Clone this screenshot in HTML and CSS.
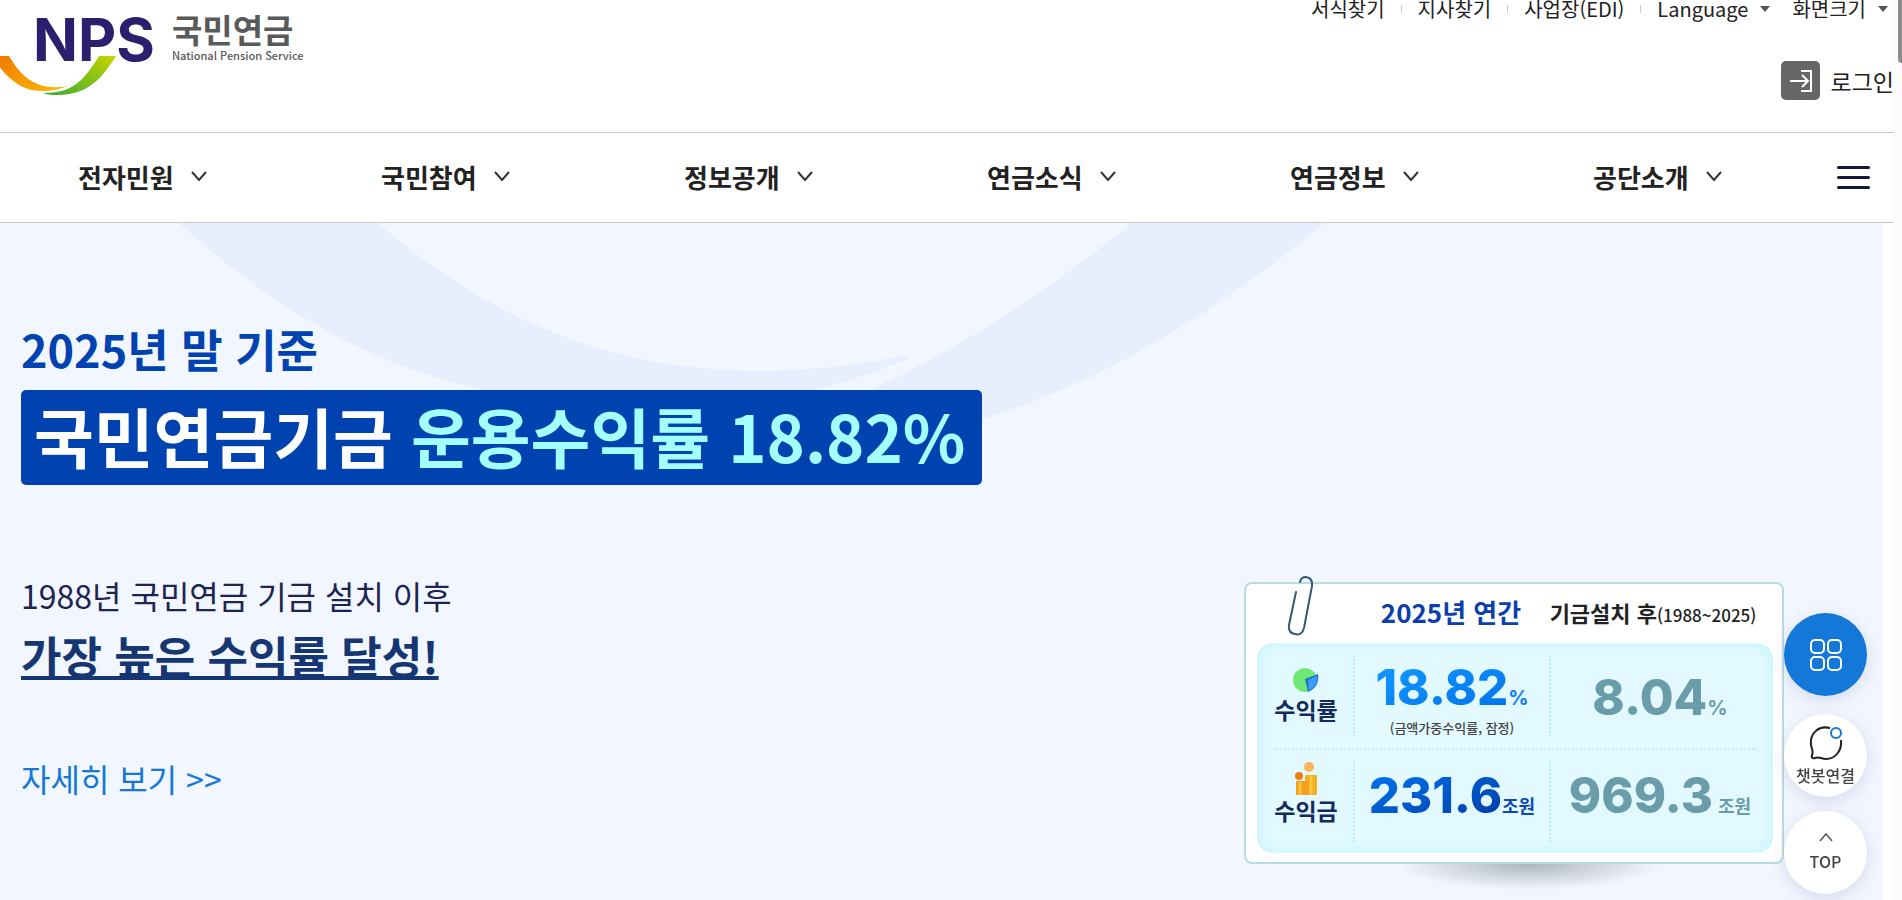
FILE: index.html
```html
<!DOCTYPE html>
<html lang="ko">
<head>
    <meta charset="UTF-8">
    <meta name="viewport" content="width=device-width, initial-scale=1.0">
    <title>국민연금</title>
    <link rel="stylesheet" href="styles.css">
</head>
<body>
    <div class="page">
        <header class="header">
            <a href="#" class="logo">
                <svg width="310" height="100" viewBox="0 0 310 100" role="img" aria-label="NPS 국민연금">
                    <defs>
                        <linearGradient id="orange" x1="0" y1="0" x2="1" y2="1">
                            <stop offset="0" stop-color="#f07800"/>
                            <stop offset="1" stop-color="#fdb900"/>
                        </linearGradient>
                        <linearGradient id="green" x1="0" y1="1" x2="1" y2="0">
                            <stop offset="0" stop-color="#3aaa35"/>
                            <stop offset="1" stop-color="#c8d400"/>
                        </linearGradient>
                    </defs>
                    <path d="M-4 56H9C20 74 34 92 68 86C60 89 51 91 43 91C24 91 10 82 -4 62Z" fill="url(#orange)"/>
                    <path d="M99 56H116C103 76 90 95 57 95Q48 95 43 93C72 93 83 82 99 56Z" fill="url(#green)"/>
                    <text x="33" y="61" class="logo-nps">NPS</text>
                    <text x="172" y="43" class="logo-name">국민연금</text>
                    <text x="172" y="60" class="logo-sub">National Pension Service</text>
                </svg>
            </a>
            <div class="header-right">
                <ul class="util">
                    <li><a href="#">서식찾기</a></li>
                    <li><a href="#">지사찾기</a></li>
                    <li><a href="#">사업장(EDI)</a></li>
                    <li><button type="button">Language <span class="caret"></span></button></li>
                    <li><button type="button">화면크기 <span class="caret"></span></button></li>
                </ul>
                <a href="#" class="login">
                    <span class="login-icon">
                        <svg width="39" height="39" viewBox="0 0 39 39" fill="none" stroke="#fff" stroke-width="2">
                            <path d="M20 10H30V30H20M9 20H26M21 14L27 20L21 26"/>
                        </svg>
                    </span>
                    로그인
                </a>
            </div>
        </header>

        <nav class="nav">
            <ul class="menu">
                <li><a href="#">전자민원 <svg class="chevron" viewBox="0 0 16 10"><path d="M1 1L8 9L15 1"/></svg></a></li>
                <li><a href="#">국민참여 <svg class="chevron" viewBox="0 0 16 10"><path d="M1 1L8 9L15 1"/></svg></a></li>
                <li><a href="#">정보공개 <svg class="chevron" viewBox="0 0 16 10"><path d="M1 1L8 9L15 1"/></svg></a></li>
                <li><a href="#">연금소식 <svg class="chevron" viewBox="0 0 16 10"><path d="M1 1L8 9L15 1"/></svg></a></li>
                <li><a href="#">연금정보 <svg class="chevron" viewBox="0 0 16 10"><path d="M1 1L8 9L15 1"/></svg></a></li>
                <li><a href="#">공단소개 <svg class="chevron" viewBox="0 0 16 10"><path d="M1 1L8 9L15 1"/></svg></a></li>
            </ul>
            <button type="button" class="all-menu" aria-label="전체메뉴">
                <span></span><span></span><span></span>
            </button>
        </nav>

        <main class="hero">
            <svg class="hero-bg" width="1340" height="260" viewBox="0 0 1340 260" fill="#e7eefe">
                <path d="M179 0H377C500 102 650 182 905 133Q910 134 905 137C870 152 820 167 760 180C620 196 440 188 276 77Q225 42 179 0Z"/>
                <path d="M1132 0H1325C1215 90 1100 160 985 195C900 218 800 230 700 222C810 202 960 140 1132 0Z"/>
            </svg>
            <div class="hero-text">
                <p class="hero-lead">2025년 말 기준</p>
                <h1 class="hero-title">국민연금기금 <em>운용수익률 18.82%</em></h1>
                <p class="hero-sub">1988년 국민연금 기금 설치 이후</p>
                <p class="hero-strong">가장 높은 수익률 달성!</p>
                <a href="#" class="hero-more">자세히 보기 &gt;&gt;</a>
            </div>

            <div class="card">
                <svg class="clip" width="28" height="62" viewBox="0 0 28 62" fill="none" stroke="#365a75" stroke-width="2" stroke-linecap="round">
                    <path d="M9 17L2 50Q1 58 8 59Q15 61 17 53L25 11Q26 3 19 2Q14 2 13 7"/>
                </svg>
                <table class="result">
                    <thead>
                        <tr>
                            <td></td>
                            <th scope="col" class="this-year">2025년 연간</th>
                            <th scope="col" class="since">기금설치 후<small>(1988~2025)</small></th>
                        </tr>
                    </thead>
                    <tbody>
                        <tr>
                            <th scope="row">
                                <svg width="26" height="26" viewBox="0 0 26 26">
                                    <circle cx="12" cy="13" r="12" fill="#70e878"/>
                                    <path d="M12 12L25 7Q27 20 15 25Z" fill="#1c71c9"/>
                                    <path d="M15 13L24 9Q25 19 16 23Z" fill="#3d9cff"/>
                                </svg>
                                수익률
                            </th>
                            <td class="with-note">
                                <strong class="num num-rate">18.82</strong><span class="unit unit-rate percent">%</span>
                                <p class="note">(금액가중수익률, 잠정)</p>
                            </td>
                            <td class="total"><strong class="num">8.04</strong><span class="unit percent">%</span></td>
                        </tr>
                        <tr>
                            <th scope="row">
                                <svg width="24" height="34" viewBox="0 0 24 34">
                                    <circle cx="15" cy="5" r="5" fill="#fbb45a"/>
                                    <circle cx="5" cy="14" r="4" fill="#f07c12"/>
                                    <rect x="11" y="13" width="12" height="20" rx="1" fill="#f3b021"/>
                                    <rect x="2" y="19" width="13" height="14" rx="1" fill="#f79d1e"/>
                                    <path d="M6 20V33M17 14V33" stroke="#f8c53d" stroke-width="3"/>
                                </svg>
                                수익금
                            </th>
                            <td><strong class="num num-money">231.6</strong><span class="unit unit-money">조원</span></td>
                            <td class="total"><strong class="num">969.3</strong><span class="unit"> 조원</span></td>
                        </tr>
                    </tbody>
                </table>
            </div>
        </main>
    </div>

    <div class="quick">
        <button type="button" class="quick-btn quick-main" aria-label="퀵메뉴">
            <svg width="32" height="32" viewBox="0 0 32 32" fill="none" stroke="#fff" stroke-width="2">
                <rect x="1" y="1" width="13" height="13" rx="4"/>
                <rect x="18" y="1" width="13" height="13" rx="4"/>
                <rect x="1" y="18" width="13" height="13" rx="4"/>
                <rect x="18" y="18" width="13" height="13" rx="4"/>
            </svg>
        </button>
        <button type="button" class="quick-btn">
            <svg width="34" height="34" viewBox="0 0 34 34" fill="none" stroke="#222" stroke-width="2">
                <path d="M21 2C9 -1 1 8 2 18C2 23 5 24 3 29Q2 33 6 32C10 30 12 33 17 33C27 33 33 24 32 14"/>
                <circle cx="27" cy="7" r="5" stroke="#1478d8"/>
            </svg>
            챗봇연결
        </button>
        <button type="button" class="quick-btn quick-top">
            <svg width="14" height="9" viewBox="0 0 14 9" fill="none" stroke="#555" stroke-width="1.5">
                <path d="M1 8L7 1L13 8"/>
            </svg>
            TOP
        </button>
    </div>
    <div class="scrollbar"></div>
</body>
</html>
```
FILE: styles.css
```css
* {
    box-sizing: border-box;
}
body {
    font-family: "Noto Sans CJK KR", "Noto Sans", sans-serif;
    margin: 0;
    color: #222;
    background-color: #fff;
    overflow: hidden;
}
ul,
p,
h1 {
    margin: 0;
    padding: 0;
}
ul {
    list-style: none;
}
a {
    color: inherit;
    text-decoration: none;
}
button {
    font-family: inherit;
    font-size: inherit;
    line-height: inherit;
    color: inherit;
    background: none;
    border: none;
    padding: 0;
    cursor: pointer;
}
.page {
    display: flex;
    flex-direction: column;
    min-height: 100vh;
    margin-right: 8px;
}

/* header */
.header {
    display: flex;
    justify-content: space-between;
    height: 132px;
}
.logo-nps {
    font-family: Inter, sans-serif;
    font-size: 59px;
    font-weight: 700;
    fill: #2a206e;
}
.logo-name {
    font-size: 33px;
    font-weight: 700;
    fill: #595a5a;
}
.logo-sub {
    font-size: 11px;
    font-weight: 500;
    fill: #595a5a;
}
.header-right {
    display: flex;
    flex-direction: column;
    align-items: flex-end;
}
.util {
    display: flex;
    font-size: 20px;
    line-height: 18px;
    padding-right: 6px;
}
.util li {
    display: flex;
    align-items: center;
}
.util li + li {
    margin-left: 16px;
}
.util li + li::before {
    content: "";
    width: 1px;
    height: 8px;
    margin-right: 16px;
    background-color: #ccc;
}
.util li:last-child::before {
    display: none;
}
.util li:last-child {
    margin-left: 22px;
}
.util button {
    display: flex;
    align-items: center;
    gap: 12px;
}
.caret {
    border: 5px solid transparent;
    border-top: 6px solid #555;
    border-bottom: 0;
}
.login {
    display: flex;
    align-items: center;
    gap: 11px;
    margin-top: 43px;
    font-size: 23px;
    line-height: 38px;
}
.login-icon {
    height: 39px;
    background-color: #666;
    border-radius: 5px;
}
.login-icon svg {
    display: block;
}

/* main menu */
.nav {
    display: flex;
    height: 91px;
    border-top: 1px solid #c6c6c6;
    border-bottom: 1px solid #c6c6c6;
}
.menu {
    display: flex;
    flex: 1;
}
.menu li {
    flex: 1;
}
.menu a {
    display: flex;
    align-items: center;
    gap: 17px;
    height: 86px;
    padding-left: 78px;
    font-size: 26px;
    font-weight: 700;
}
.chevron {
    width: 16px;
    height: 10px;
    fill: none;
    stroke: #333;
    stroke-width: 2;
}
.all-menu {
    display: flex;
    flex-direction: column;
    justify-content: center;
    gap: 7px;
    width: 76px;
    padding-left: 19px;
}
.all-menu span {
    width: 33px;
    height: 3px;
    border-radius: 2px;
    background-color: #14193a;
}

/* visual */
.hero {
    position: relative;
    display: flex;
    flex: 1;
    justify-content: space-between;
    margin-right: 11px;
    padding: 96px 99px 36px 21px;
    background-color: #f1f6ff;
}
.hero-bg {
    position: absolute;
    top: 0;
    left: 0;
}
.hero-text {
    position: relative;
}
.hero-lead {
    font-size: 45px;
    line-height: 60px;
    font-weight: 700;
    color: #0043b0;
}
.hero-title {
    margin-top: 11px;
    padding: 0 17px 4px 13px;
    font-size: 65px;
    line-height: 91px;
    font-weight: 700;
    color: #fff;
    background-color: #0043b0;
    border-radius: 5px;
}
.hero-title em {
    font-style: normal;
    color: #a4ffff;
}
.hero-sub {
    margin-top: 86px;
    font-size: 32px;
    line-height: 48px;
    color: #1d2450;
}
.hero-strong {
    margin-top: 4px;
    font-size: 44px;
    line-height: 64px;
    font-weight: 700;
    color: #153673;
    text-decoration: underline;
    text-decoration-thickness: 4px;
    text-decoration-skip-ink: none;
}
.hero-more {
    display: inline-block;
    margin-top: 67px;
    font-size: 32px;
    line-height: 48px;
    color: #1478d8;
}

/* result card */
.card {
    position: relative;
    align-self: flex-end;
    width: 540px;
    padding: 0 9px 9px 11px;
    background-color: #fff;
    border: 2px solid #b9dce2;
    border-radius: 8px;
}
.card::after {
    content: "";
    position: absolute;
    top: 100%;
    left: 150px;
    right: 120px;
    height: 26px;
    margin-top: 2px;
    background: radial-gradient(ellipse 50% 100% at 50% 0, #aeb4bd, transparent);
}
.clip {
    position: absolute;
    top: -9px;
    left: 41px;
}
.result,
.result thead,
.result tbody {
    display: block;
}
.result tr {
    display: grid;
    grid-template-columns: 80px 196px 1fr;
    margin: 0 16px;
}
.result th,
.result td {
    padding: 0;
    text-align: center;
}
.result thead th {
    font-size: 26px;
    line-height: 56px;
    white-space: nowrap;
}
.result .this-year {
    color: #0b3fab;
}
.result .since {
    font-size: 22px;
}
.since small {
    font-size: 17px;
    font-weight: 500;
}
.result tbody {
    background-color: #e2f9ff;
    border-radius: 16px;
    box-shadow: inset 0 0 12px 4px #cdf5ff;
}
.result tbody tr {
    height: 105px;
}
.result tbody tr + tr {
    border-top: 2px dotted #b9f0fb;
}
.result tbody th,
.result tbody td {
    align-self: center;
    height: 80px;
}
.result tbody th {
    display: flex;
    flex-direction: column;
    align-items: center;
    gap: 2px;
    padding: 11px 14px 0 0;
    font-size: 23px;
    line-height: 28px;
    white-space: nowrap;
    color: #142a5c;
}
.result tbody tr + tr th {
    padding-top: 0;
    gap: 0;
}
.result tbody td {
    border-left: 2px dotted #b9f0fb;
    padding-top: 4px;
    line-height: 60px;
    white-space: nowrap;
}
.result tbody tr:first-child .total {
    padding-top: 12px;
}
.result tbody .with-note {
    padding-top: 2px;
}
.result tbody .total {
    padding-left: 12px;
    color: #6b9ca9;
}
.num {
    font-family: Inter, sans-serif;
    font-size: 49px;
    font-weight: 800;
}
.num-rate {
    color: transparent;
    background: linear-gradient(160deg, #149bff, #0070ec);
    background-clip: text;
}
.num-money {
    color: transparent;
    background: linear-gradient(160deg, #0078f4, #0038a0);
    background-clip: text;
}
.unit {
    font-size: 18px;
    font-weight: 700;
}
.percent {
    font-family: Inter, sans-serif;
    font-size: 20px;
}
.unit-rate {
    color: #0d7cf2;
}
.unit-money {
    color: #0b49b8;
}
.note {
    margin-top: -8px;
    font-size: 13px;
    line-height: 16px;
    font-weight: 500;
    color: #444;
}

/* floating buttons */
.quick {
    position: fixed;
    right: 35px;
    bottom: 6px;
    display: flex;
    flex-direction: column;
    gap: 14px;
}
.quick-btn {
    display: flex;
    flex-direction: column;
    align-items: center;
    justify-content: center;
    gap: 4px;
    width: 83px;
    height: 83px;
    border-radius: 50%;
    background-color: #fff;
    box-shadow: 0 4px 16px rgba(60, 60, 120, 0.15);
    font-size: 16px;
    line-height: 22px;
    font-weight: 500;
    color: #444;
}
.quick-main {
    margin-bottom: 4px;
    background-color: #1478d8;
}
.quick-top {
    gap: 8px;
}
.scrollbar {
    position: fixed;
    top: 0;
    right: 0;
    width: 8px;
    height: 100%;
    background-color: #fcfcfc;
}
.scrollbar::before {
    content: "";
    display: block;
    width: 4px;
    height: 63px;
    margin-left: 4px;
    border-radius: 0 0 0 4px;
    background-color: #8b8b8b;
}
```
